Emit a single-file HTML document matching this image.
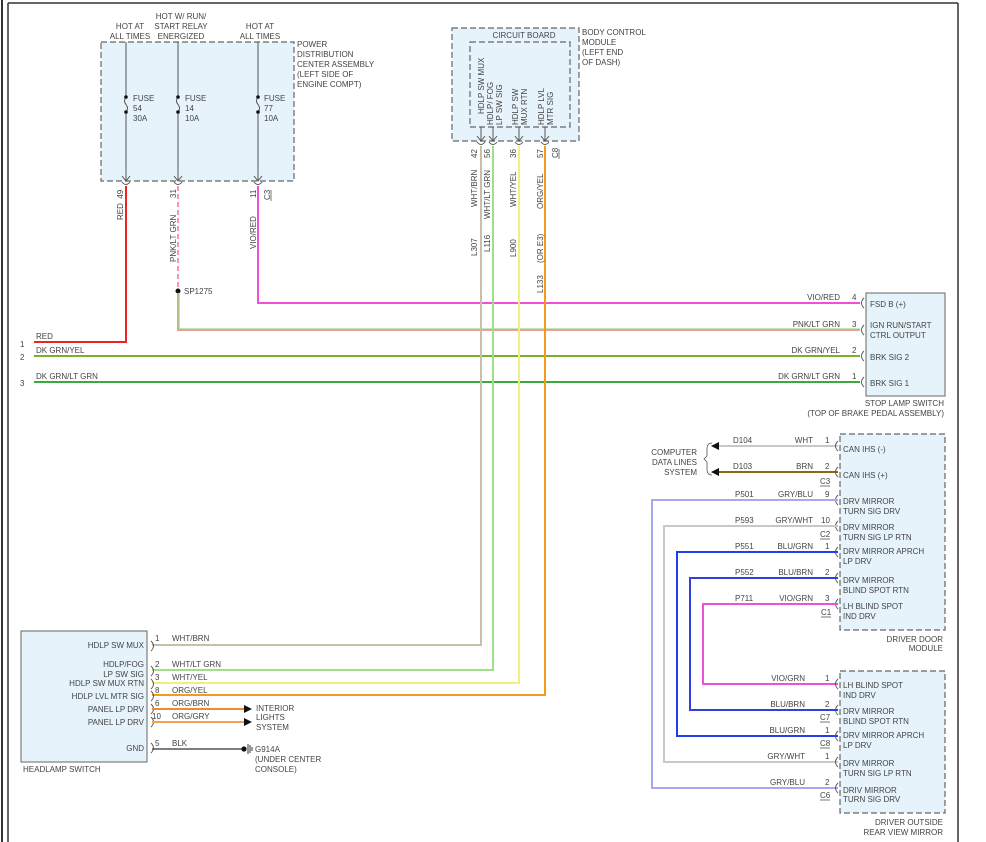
<!DOCTYPE html>
<html><head><meta charset="utf-8"><style>
html,body{margin:0;padding:0;background:#fff;width:986px;height:842px;overflow:hidden}
svg{display:block}
text{font-family:"Liberation Sans",Arial,sans-serif;font-size:8px;fill:#444}
.dash{fill:#e6f3fb;stroke:#666;stroke-width:1.2;stroke-dasharray:6,3}
.box{fill:#e6f3fb;stroke:#666;stroke-width:1}
.cup{fill:none;stroke:#555;stroke-width:0.9}
.r{text-anchor:end}.m{text-anchor:middle}
</style></head><body>
<svg width="986" height="842" viewBox="0 0 986 842" xmlns="http://www.w3.org/2000/svg">
<!-- frame -->
<line x1="2" y1="0" x2="2" y2="842" stroke="#333" stroke-width="2"/>
<line x1="8" y1="3" x2="8" y2="842" stroke="#333" stroke-width="1.5"/>
<line x1="8" y1="3" x2="958" y2="3" stroke="#333" stroke-width="1.5"/>
<line x1="958" y1="3" x2="958" y2="842" stroke="#333" stroke-width="1.5"/>

<!-- PDC -->
<rect class="dash" x="101" y="42" width="193" height="139"/>
<text class="m" x="130" y="29">HOT AT</text><text class="m" x="130" y="39">ALL TIMES</text>
<text class="m" x="181" y="19">HOT W/ RUN/</text><text class="m" x="181" y="29">START RELAY</text><text class="m" x="181" y="39">ENERGIZED</text>
<text class="m" x="260" y="29">HOT AT</text><text class="m" x="260" y="39">ALL TIMES</text>
<text x="297" y="47">POWER</text><text x="297" y="57">DISTRIBUTION</text><text x="297" y="67">CENTER ASSEMBLY</text><text x="297" y="77">(LEFT SIDE OF</text><text x="297" y="87">ENGINE COMPT)</text>
<g stroke="#555" stroke-width="1" fill="none">
<line x1="126" y1="42" x2="126" y2="96"/><line x1="126" y1="112" x2="126" y2="181"/>
<line x1="178" y1="42" x2="178" y2="96"/><line x1="178" y1="112" x2="178" y2="181"/>
<line x1="258" y1="42" x2="258" y2="96"/><line x1="258" y1="112" x2="258" y2="181"/>
<path d="M126 97 q-3 4 0 7.5 q3 4 0 7.5"/><path d="M178 97 q-3 4 0 7.5 q3 4 0 7.5"/><path d="M258 97 q-3 4 0 7.5 q3 4 0 7.5"/>
<path d="M122 176 l4 5 l4 -5"/><path d="M174 176 l4 5 l4 -5"/><path d="M254 176 l4 5 l4 -5"/>
<path d="M122 182 q4 5 8 0"/><path d="M174 182 q4 5 8 0"/><path d="M254 182 q4 5 8 0"/>
</g>
<g fill="#111"><circle cx="126" cy="97" r="1.8"/><circle cx="126" cy="112" r="1.8"/><circle cx="178" cy="97" r="1.8"/><circle cx="178" cy="112" r="1.8"/><circle cx="258" cy="97" r="1.8"/><circle cx="258" cy="112" r="1.8"/></g>
<text x="133" y="101">FUSE</text><text x="133" y="111">54</text><text x="133" y="121">30A</text>
<text x="185" y="101">FUSE</text><text x="185" y="111">14</text><text x="185" y="121">10A</text>
<text x="264" y="101">FUSE</text><text x="264" y="111">77</text><text x="264" y="121">10A</text>
<text transform="translate(123,220) rotate(-90)">RED&#160;&#160;49</text>
<text transform="translate(176,198) rotate(-90)">31</text>
<text transform="translate(176,262) rotate(-90)">PNK/LT GRN</text>
<text transform="translate(256,198) rotate(-90)">11</text>
<text transform="translate(270,200) rotate(-90)">C3</text>
<line x1="271" y1="190" x2="271" y2="201" stroke="#555" stroke-width="0.8"/>
<text transform="translate(256,249) rotate(-90)">VIO/RED</text>

<!-- wires top-left -->
<polyline points="126,186 126,342 34,342" fill="none" stroke="#ee2222" stroke-width="2"/>
<line x1="178" y1="186" x2="178" y2="289" stroke="#f47aa0" stroke-width="1.6" stroke-dasharray="5,3"/>
<circle cx="178" cy="291" r="2.5" fill="#111"/>
<text x="184" y="294">SP1275</text>
<polyline points="178,293 178,330 860,330" fill="none" stroke="#e8a0a0" stroke-width="2"/>
<polyline points="179,293 179,329 860,329" fill="none" stroke="#7fd66a" stroke-width="1"/>
<polyline points="258,186 258,303 860,303" fill="none" stroke="#f04fd8" stroke-width="2"/>
<line x1="34" y1="356" x2="860" y2="356" stroke="#7ab02a" stroke-width="2"/>
<line x1="34" y1="382" x2="860" y2="382" stroke="#3aaa3a" stroke-width="2"/>
<text x="36" y="339">RED</text><text x="20" y="347">1</text>
<text x="36" y="353">DK GRN/YEL</text><text x="20" y="360">2</text>
<text x="36" y="379">DK GRN/LT GRN</text><text x="20" y="386">3</text>

<!-- BCM -->
<rect class="dash" x="452" y="28" width="127" height="113"/>
<rect class="dash" x="470" y="42" width="100" height="85"/>
<text class="m" x="524" y="38">CIRCUIT BOARD</text>
<text x="582" y="35">BODY CONTROL</text><text x="582" y="45">MODULE</text><text x="582" y="55">(LEFT END</text><text x="582" y="65">OF DASH)</text>
<text transform="translate(484,114) rotate(-90)">HDLP SW MUX</text>
<text transform="translate(493,125) rotate(-90)">HDLP/ FOG</text>
<text transform="translate(502,125) rotate(-90)">LP SW SIG</text>
<text transform="translate(518,125) rotate(-90)">HDLP SW</text>
<text transform="translate(527,125) rotate(-90)">MUX RTN</text>
<text transform="translate(544,125) rotate(-90)">HDLP LVL</text>
<text transform="translate(553,125) rotate(-90)">MTR SIG</text>
<g stroke="#555" stroke-width="1" fill="none">
<line x1="481" y1="127" x2="481" y2="141"/><line x1="493" y1="127" x2="493" y2="141"/><line x1="519" y1="127" x2="519" y2="141"/><line x1="545" y1="127" x2="545" y2="141"/>
<path d="M477 136 l4 5 l4 -5"/><path d="M489 136 l4 5 l4 -5"/><path d="M515 136 l4 5 l4 -5"/><path d="M541 136 l4 5 l4 -5"/>
<path d="M477 142 q4 5 8 0"/><path d="M489 142 q4 5 8 0"/><path d="M515 142 q4 5 8 0"/><path d="M541 142 q4 5 8 0"/>
</g>
<polyline points="481,146 481,645 152,645" fill="none" stroke="#c9bfa8" stroke-width="2"/>
<polyline points="493,146 493,670 152,670" fill="none" stroke="#9ee08a" stroke-width="2"/>
<polyline points="519,146 519,683 152,683" fill="none" stroke="#f2ee80" stroke-width="2"/>
<polyline points="545,146 545,695 152,695" fill="none" stroke="#f59a1a" stroke-width="2"/>
<text transform="translate(477,158) rotate(-90)">42</text>
<text transform="translate(490,158) rotate(-90)">56</text>
<text transform="translate(516,158) rotate(-90)">36</text>
<text transform="translate(543,158) rotate(-90)">57</text>
<text transform="translate(558,158) rotate(-90)">C8</text>
<line x1="559" y1="149" x2="559" y2="159" stroke="#555" stroke-width="0.8"/>
<text transform="translate(477,207) rotate(-90)">WHT/BRN</text>
<text transform="translate(490,219) rotate(-90)">WHT/LT GRN</text>
<text transform="translate(516,207) rotate(-90)">WHT/YEL</text>
<text transform="translate(543,209) rotate(-90)">ORG/YEL</text>
<text transform="translate(477,256) rotate(-90)">L307</text>
<text transform="translate(490,252) rotate(-90)">L116</text>
<text transform="translate(516,257) rotate(-90)">L900</text>
<text transform="translate(543,263) rotate(-90)">(OR E3)</text>
<text transform="translate(543,293) rotate(-90)">L133</text>

<!-- Stop lamp switch -->
<rect class="box" x="866" y="293" width="79" height="103"/>
<g class="cup"><path d="M864 298 q-5 5 0 10"/><path d="M864 325 q-5 5 0 10"/><path d="M864 351 q-5 5 0 10"/><path d="M864 377 q-5 5 0 10"/></g>
<text class="r" x="840" y="300">VIO/RED</text><text x="852" y="300">4</text><text x="870" y="307">FSD B (+)</text>
<text class="r" x="840" y="327">PNK/LT GRN</text><text x="852" y="327">3</text><text x="870" y="328">IGN RUN/START</text><text x="870" y="338">CTRL OUTPUT</text>
<text class="r" x="840" y="353">DK GRN/YEL</text><text x="852" y="353">2</text><text x="870" y="360">BRK SIG 2</text>
<text class="r" x="840" y="379">DK GRN/LT GRN</text><text x="852" y="379">1</text><text x="870" y="386">BRK SIG 1</text>
<text class="r" x="944" y="406">STOP LAMP SWITCH</text><text class="r" x="944" y="416">(TOP OF BRAKE PEDAL ASSEMBLY)</text>

<!-- Headlamp switch -->
<rect class="box" x="21" y="631" width="126" height="131"/>
<text class="r" x="144" y="648">HDLP SW MUX</text>
<text class="r" x="144" y="667">HDLP/FOG</text><text class="r" x="144" y="677">LP SW SIG</text>
<text class="r" x="144" y="686">HDLP SW MUX RTN</text>
<text class="r" x="144" y="699">HDLP LVL MTR SIG</text>
<text class="r" x="144" y="712">PANEL LP DRV</text>
<text class="r" x="144" y="725">PANEL LP DRV</text>
<text class="r" x="144" y="751">GND</text>
<text x="23" y="772">HEADLAMP SWITCH</text>
<g class="cup"><path d="M151 641 q5 5 0 10"/><path d="M151 666 q5 5 0 10"/><path d="M151 679 q5 5 0 10"/><path d="M151 691 q5 5 0 10"/><path d="M151 704 q5 5 0 10"/><path d="M151 717 q5 5 0 10"/><path d="M151 743 q5 5 0 10"/></g>
<text x="155" y="641">1</text><text x="172" y="641">WHT/BRN</text>
<text x="155" y="667">2</text><text x="172" y="667">WHT/LT GRN</text>
<text x="155" y="680">3</text><text x="172" y="680">WHT/YEL</text>
<text x="155" y="693">8</text><text x="172" y="693">ORG/YEL</text>
<text x="155" y="706">6</text><text x="172" y="706">ORG/BRN</text>
<text x="152" y="719">10</text><text x="172" y="719">ORG/GRY</text>
<text x="155" y="746">5</text><text x="172" y="746">BLK</text>
<line x1="152" y1="709" x2="244" y2="709" stroke="#f08a30" stroke-width="2"/>
<line x1="152" y1="722" x2="244" y2="722" stroke="#f5a050" stroke-width="2"/>
<path d="M244 705 l8 4 l-8 4z M244 718 l8 4 l-8 4z" fill="#111"/>
<text x="256" y="711">INTERIOR</text><text x="256" y="720">LIGHTS</text><text x="256" y="730">SYSTEM</text>
<line x1="152" y1="749" x2="242" y2="749" stroke="#555" stroke-width="1.6"/>
<circle cx="244" cy="749" r="2.6" fill="#111"/>
<g stroke="#333" stroke-width="1"><line x1="248" y1="744" x2="248" y2="754"/><line x1="250" y1="745" x2="250" y2="753"/><line x1="252" y1="747" x2="252" y2="751"/></g>
<text x="255" y="752">G914A</text><text x="255" y="762">(UNDER CENTER</text><text x="255" y="772">CONSOLE)</text>

<!-- computer data lines -->
<text class="r" x="697" y="455">COMPUTER</text><text class="r" x="697" y="465">DATA LINES</text><text class="r" x="697" y="475">SYSTEM</text>
<path d="M712 443 q-5 0 -5 6 v7 l-3 3 l3 3 v7 q0 6 5 6" fill="none" stroke="#555" stroke-width="0.8"/>
<line x1="718" y1="446" x2="838" y2="446" stroke="#c8c8c8" stroke-width="2"/>
<line x1="718" y1="472" x2="838" y2="472" stroke="#8a6a10" stroke-width="2"/>
<path d="M711 446 l8 -4 v8z M711 472 l8 -4 v8z" fill="#111"/>
<text x="733" y="443">D104</text><text class="r" x="813" y="443">WHT</text><text x="825" y="443">1</text>
<text x="733" y="469">D103</text><text class="r" x="813" y="469">BRN</text><text x="825" y="469">2</text>
<text x="820" y="484">C3</text><line x1="820" y1="486" x2="830" y2="486" stroke="#555" stroke-width="0.8"/>

<!-- driver door module -->
<rect class="dash" x="840" y="434" width="105" height="196"/>
<g class="cup"><path d="M838 441 q-5 5 0 10"/><path d="M838 467 q-5 5 0 10"/><path d="M838 495 q-5 5 0 10"/><path d="M838 521 q-5 5 0 10"/><path d="M838 547 q-5 5 0 10"/><path d="M838 573 q-5 5 0 10"/><path d="M838 599 q-5 5 0 10"/></g>
<text x="843" y="452">CAN IHS (-)</text><text x="843" y="478">CAN IHS (+)</text>
<text x="843" y="504">DRV MIRROR</text><text x="843" y="514">TURN SIG DRV</text>
<text x="843" y="530">DRV MIRROR</text><text x="843" y="540">TURN SIG LP RTN</text>
<text x="843" y="554">DRV MIRROR APRCH</text><text x="843" y="564">LP DRV</text>
<text x="843" y="583">DRV MIRROR</text><text x="843" y="593">BLIND SPOT RTN</text>
<text x="843" y="609">LH BLIND SPOT</text><text x="843" y="619">IND DRV</text>
<text class="r" x="943" y="642">DRIVER DOOR</text><text class="r" x="943" y="651">MODULE</text>

<polyline points="838,500 652,500 652,788 838,788" fill="none" stroke="#a8a8ee" stroke-width="2"/>
<polyline points="838,526 664,526 664,762 838,762" fill="none" stroke="#c8c8c8" stroke-width="2"/>
<polyline points="838,552 677,552 677,736 838,736" fill="none" stroke="#2040ee" stroke-width="2"/>
<polyline points="838,578 690,578 690,710 838,710" fill="none" stroke="#3040dd" stroke-width="2"/>
<polyline points="838,604 703,604 703,684 838,684" fill="none" stroke="#f050d8" stroke-width="2"/>
<text x="735" y="497">P501</text><text class="r" x="813" y="497">GRY/BLU</text><text x="825" y="497">9</text>
<text x="735" y="523">P593</text><text class="r" x="813" y="523">GRY/WHT</text><text x="821" y="523">10</text>
<text x="820" y="537">C2</text><line x1="820" y1="539" x2="830" y2="539" stroke="#555" stroke-width="0.8"/>
<text x="735" y="549">P551</text><text class="r" x="813" y="549">BLU/GRN</text><text x="825" y="549">1</text>
<text x="735" y="575">P552</text><text class="r" x="813" y="575">BLU/BRN</text><text x="825" y="575">2</text>
<text x="735" y="601">P711</text><text class="r" x="813" y="601">VIO/GRN</text><text x="825" y="601">3</text>
<text x="821" y="615">C1</text><line x1="821" y1="617" x2="831" y2="617" stroke="#555" stroke-width="0.8"/>

<!-- mirror -->
<rect class="dash" x="840" y="671" width="105" height="142"/>
<g class="cup"><path d="M838 679 q-5 5 0 10"/><path d="M838 705 q-5 5 0 10"/><path d="M838 731 q-5 5 0 10"/><path d="M838 757 q-5 5 0 10"/><path d="M838 783 q-5 5 0 10"/></g>
<text class="r" x="805" y="681">VIO/GRN</text><text x="825" y="681">1</text>
<text class="r" x="805" y="707">BLU/BRN</text><text x="825" y="707">2</text>
<text x="820" y="720">C7</text><line x1="820" y1="722" x2="830" y2="722" stroke="#555" stroke-width="0.8"/>
<text class="r" x="805" y="733">BLU/GRN</text><text x="825" y="733">1</text>
<text x="820" y="746">C8</text><line x1="820" y1="748" x2="830" y2="748" stroke="#555" stroke-width="0.8"/>
<text class="r" x="805" y="759">GRY/WHT</text><text x="825" y="759">1</text>
<text class="r" x="805" y="785">GRY/BLU</text><text x="825" y="785">2</text>
<text x="820" y="798">C6</text><line x1="820" y1="800" x2="830" y2="800" stroke="#555" stroke-width="0.8"/>
<text x="843" y="688">LH BLIND SPOT</text><text x="843" y="698">IND DRV</text>
<text x="843" y="714">DRV MIRROR</text><text x="843" y="724">BLIND SPOT RTN</text>
<text x="843" y="738">DRV MIRROR APRCH</text><text x="843" y="748">LP DRV</text>
<text x="843" y="766">DRV MIRROR</text><text x="843" y="776">TURN SIG LP RTN</text>
<text x="843" y="793">DRIV MIRROR</text><text x="843" y="802">TURN SIG DRV</text>
<text class="r" x="943" y="825">DRIVER OUTSIDE</text><text class="r" x="943" y="835">REAR VIEW MIRROR</text>
</svg>
</body></html>
